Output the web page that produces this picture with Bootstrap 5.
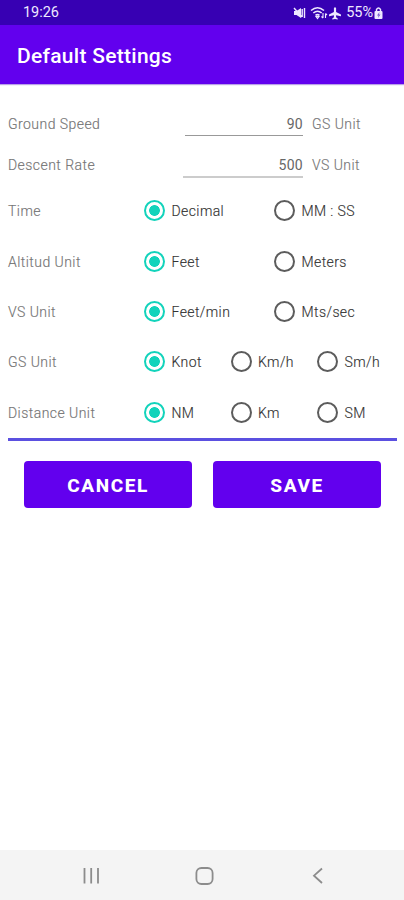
<!DOCTYPE html>
<html lang="en">
<head>
<meta charset="utf-8">
<meta name="viewport" content="width=device-width, initial-scale=1">
<title>Default Settings</title>
<link href="https://cdn.jsdelivr.net/npm/bootstrap@5.3.0/dist/css/bootstrap.min.css" rel="stylesheet">
<style>
body{font-family:Roboto,"Liberation Sans",sans-serif;font-size:14px;letter-spacing:.45px;color:#444;height:900px;overflow:hidden}
.statusbar{height:25px;background:#3700b3;color:#eee8ff;font-size:14.5px;letter-spacing:-.05px;padding:1px 20px 0 23px}
.appbar{height:58.5px;background:#6200ee;font-size:21px;font-weight:500;letter-spacing:.28px;line-height:1;padding:4px 17px 0;box-shadow:0 1px 1px #b9a0e8}
.settings{padding:20px 7px 0 8px}
.entry-row{height:41.5px}
.option-row{height:50.4px}
.caption{width:136px;color:#757575;font-weight:300;-webkit-text-stroke:.15px #757575}
.field{height:24px;line-height:24px;border:0;border-bottom:1.5px solid #999;color:#666;padding:0;letter-spacing:.3px}
.field-speed{width:118px;margin-left:41px}
.field-rate{width:120px;margin-left:39px;border-bottom:2px solid #ccc}
.unit{margin-left:9px;color:#777;font-weight:300;-webkit-text-stroke:.15px #777}
.choice{font-weight:300;-webkit-text-stroke:.15px #333;color:#333;letter-spacing:.4px;gap:6.500px}
.choice .form-check-input{width:21px;height:21px;border:2px solid #5c5c5c;background:none;margin:-2px 0 0}
.choice .form-check-input:checked{border-color:#12d3bb;background:radial-gradient(circle,#12d3bb 5px,transparent 5.7px)}
.half{width:130px}
.third{width:86.5px}
.divider{height:2.5px;background:#5b50e0}
.actions{gap:21px;padding:20px 16px 0 16px}
.action{height:47px;background:#6200ee;border:0;border-radius:4px;color:#fff;font-size:19px;font-weight:800;letter-spacing:1.6px;padding:3px 0 0}
.action:hover{background:#5400d0;color:#fff}
.navkeys{height:50px;background:#f4f4f4}
</style>
<script src="https://cdn.jsdelivr.net/npm/bootstrap@5.3.0/dist/js/bootstrap.bundle.min.js"></script>
</head>
<body class="d-flex flex-column bg-white">
<div class="statusbar d-flex align-items-center justify-content-between flex-shrink-0">
<span>19:26</span>
<div class="d-flex align-items-center">
<svg width="13" height="12" viewBox="0 0 13 12" fill="#eee8ff"><path d="M1 4h2.500L8 1v10L3.500 8H1z"/><path d="M1 1l8 9M9.200 2v8M11.500 1v10" stroke="#eee8ff" stroke-width="1.400" fill="none"/></svg>
<svg class="ms-1" width="18" height="14" viewBox="0 0 18 14" fill="none" stroke="#eee8ff" stroke-width="1.600"><path d="M1 4.500Q7.500-1 14 4.500M3.300 7q4.200-3.500 8.400 0M5.500 9.400q2-1.600 4 0"/><path d="M6 10.500h3l-1.500 2zM13 7v5M11.500 10.500l1.500 1.500M15.500 12V7.500M17 9l-1.500-1.500" stroke-width="1.100"/></svg>
<svg width="14" height="13" viewBox="0 0 24 24" fill="#eee8ff"><path d="M10 2q2-3 4 0v7l9 5v3l-9-2v4l3 2v2l-5-1-5 1v-2l3-2v-4l-9 2v-3l9-5z"/></svg>
<span class="ms-1">55%</span>
<svg class="ms-0" width="11" height="12" viewBox="0 0 10 12"><path d="M3 4V2.500q2-3 4 0V4" fill="none" stroke="#eee8ff" stroke-width="1.400"/><rect x="1" y="4" width="8" height="8" rx="1" fill="#eee8ff"/><path d="M6 5L3.500 8.500H5L4.500 11 7 7.500H5.500z" fill="#7657cc"/></svg>
</div>
</div>
<header class="appbar d-flex align-items-center text-white flex-shrink-0">Default Settings</header>
<main class="settings flex-grow-1">
<div class="entry-row d-flex align-items-center"><span class="caption">Ground Speed</span><input class="field field-speed form-control-plaintext text-end" value="90" aria-label="Ground Speed"><span class="unit">GS Unit</span></div>
<div class="entry-row d-flex align-items-center"><span class="caption">Descent Rate</span><input class="field field-rate form-control-plaintext text-end" value="500" aria-label="Descent Rate"><span class="unit">VS Unit</span></div>
<div class="option-row d-flex align-items-center"><span class="caption">Time</span><label class="choice half d-flex align-items-center"><input class="form-check-input" type="radio" name="time" checked>Decimal</label><label class="choice d-flex align-items-center"><input class="form-check-input" type="radio" name="time">MM : SS</label></div>
<div class="option-row d-flex align-items-center"><span class="caption">Altitud Unit</span><label class="choice half d-flex align-items-center"><input class="form-check-input" type="radio" name="alt" checked>Feet</label><label class="choice d-flex align-items-center"><input class="form-check-input" type="radio" name="alt">Meters</label></div>
<div class="option-row d-flex align-items-center"><span class="caption">VS Unit</span><label class="choice half d-flex align-items-center"><input class="form-check-input" type="radio" name="vs" checked>Feet/min</label><label class="choice d-flex align-items-center"><input class="form-check-input" type="radio" name="vs">Mts/sec</label></div>
<div class="option-row d-flex align-items-center"><span class="caption">GS Unit</span><label class="choice third d-flex align-items-center"><input class="form-check-input" type="radio" name="gs" checked>Knot</label><label class="choice third d-flex align-items-center"><input class="form-check-input" type="radio" name="gs">Km/h</label><label class="choice d-flex align-items-center"><input class="form-check-input" type="radio" name="gs">Sm/h</label></div>
<div class="option-row d-flex align-items-center"><span class="caption">Distance Unit</span><label class="choice third d-flex align-items-center"><input class="form-check-input" type="radio" name="dist" checked>NM</label><label class="choice third d-flex align-items-center"><input class="form-check-input" type="radio" name="dist">Km</label><label class="choice d-flex align-items-center"><input class="form-check-input" type="radio" name="dist">SM</label></div>
<div class="divider"></div>
<div class="actions d-flex"><button type="button" class="action btn flex-fill w-50">CANCEL</button><button type="button" class="action btn flex-fill w-50">SAVE</button></div>
</main>
<nav class="navkeys flex-shrink-0" aria-label="System">
<svg class="d-block" width="404" height="50" viewBox="0 0 404 50" fill="none" stroke="#8c8c8c" stroke-width="1.800"><path d="M84.500 18v15.500M91.200 18v15.500M98 18v15.500"/><rect x="196.400" y="18" width="16.200" height="16" rx="5"/><path d="M322 18.500l-8 7.200 8 7.300"/></svg>
</nav>
</body>
</html>
